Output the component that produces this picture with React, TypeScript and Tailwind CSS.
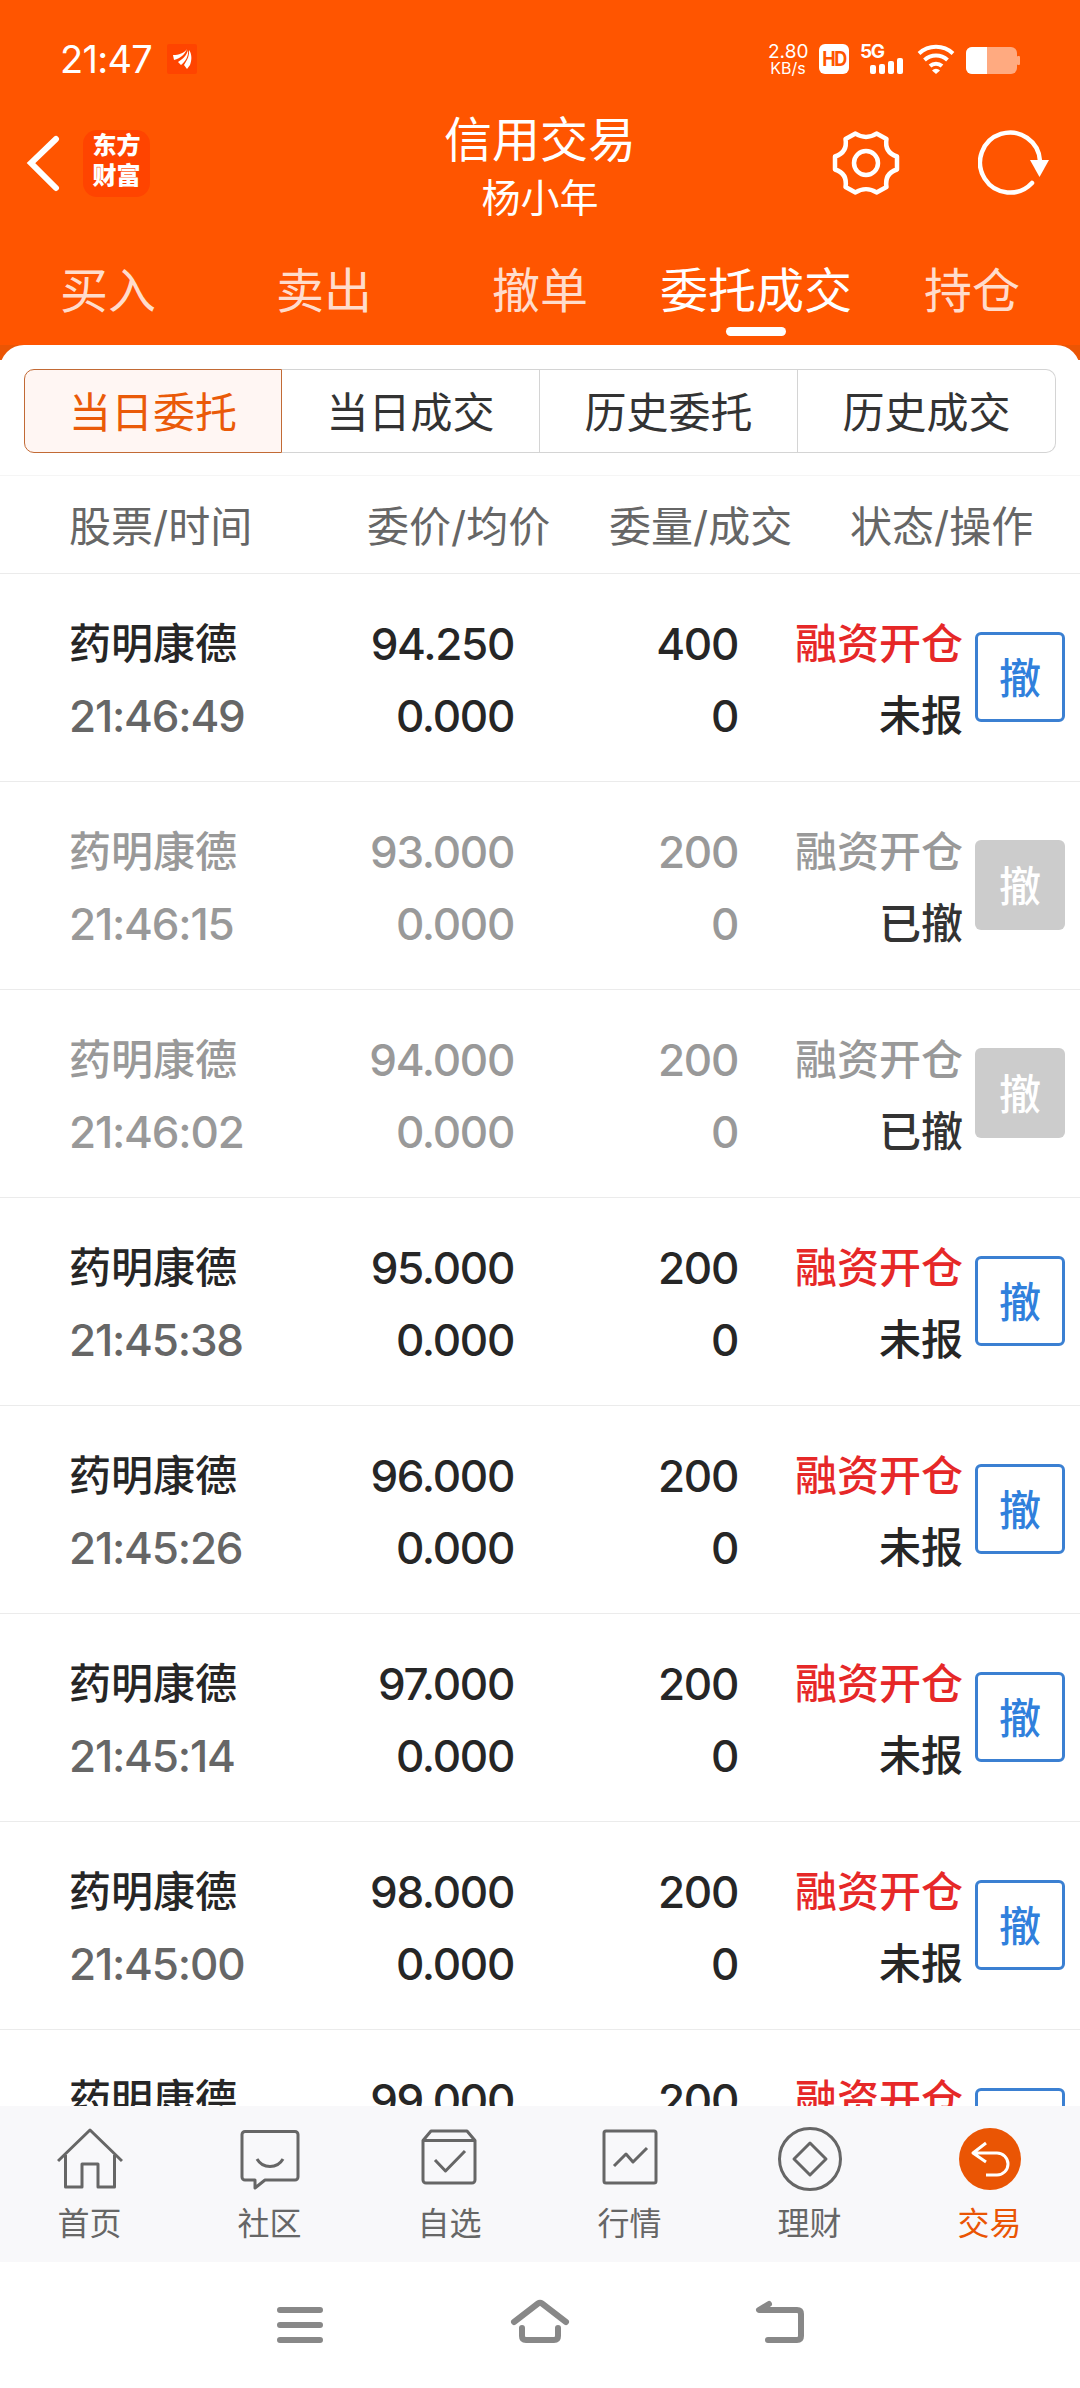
import React from 'react';

type Order = {
  time: string;
  price: string;
  amount: string;
  cancelled?: boolean;
};

const orders: Order[] = [
  { time: '21:46:49', price: '94.250', amount: '400' },
  { time: '21:46:15', price: '93.000', amount: '200', cancelled: true },
  { time: '21:46:02', price: '94.000', amount: '200', cancelled: true },
  { time: '21:45:38', price: '95.000', amount: '200' },
  { time: '21:45:26', price: '96.000', amount: '200' },
  { time: '21:45:14', price: '97.000', amount: '200' },
  { time: '21:45:00', price: '98.000', amount: '200' },
  { time: '', price: '99.000', amount: '200' },
];

const tabs = ['买入', '卖出', '撤单', '委托成交', '持仓'];
const segments = ['当日委托', '当日成交', '历史委托', '历史成交'];

const StatusBar: React.FC = () => (
  <div className="flex h-[88px] items-start pl-[60px] pr-[60px] pt-[44px] text-white">
    <span className="w-[107px] text-[38px] leading-[30px] tracking-[-0.7px]">21:47</span>
    <svg className="h-[30px] w-[30px]" viewBox="0 0 30 30">
      <rect width="30" height="30" rx="2" fill="#ff4400" />
      <g fill="#fff">
        <path d="M6 11C12 11 17 9 20 5C18 10 14 14 7 16z" />
        <path d="M11 18C16 15 20 11 21 6C22 12 18 18 14 21z" />
        <path d="M17 21C21 15 22.500 11 22 6C25 10 25 16 23 21L20 25z" />
      </g>
    </svg>
    <div className="ml-auto flex items-start">
      <div className="w-[40px] whitespace-nowrap text-center">
        <div className="text-[19px] leading-[16px]">2.80</div>
        <div className="text-[16px] leading-[16px]">KB/s</div>
      </div>
      <div className="ml-[11px] flex h-[30px] w-[30px] items-center justify-center rounded-[6px] bg-white text-[18px] font-bold leading-none tracking-[-1.5px] text-[#ff5500]">
        <span className="scale-y-110">HD</span>
      </div>
      <div className="ml-[11px] h-[30px] w-[46px]">
        <div className="h-[14px] text-[19px] font-bold leading-[16px] tracking-[-1.5px]">5G</div>
        <div className="flex h-[16px] items-end gap-[3px] pl-[10px]">
          <span className="h-[9px] w-[6px] rounded-[2px] bg-white" />
          <span className="h-[10px] w-[6px] rounded-[2px] bg-white" />
          <span className="h-[13px] w-[6px] rounded-[2px] bg-white" />
          <span className="h-[16px] w-[6px] rounded-[2px] bg-white" />
        </div>
      </div>
      <svg className="ml-[11px] h-[30px] w-[38px]" viewBox="0 0 38 30" fill="none" stroke="#fff" strokeWidth="4">
        <path d="M2 9.500a25 25 0 0 1 34 0" />
        <path d="M7.500 16a17 17 0 0 1 23 0" />
        <path d="M13 22a9 9 0 0 1 12 0" />
        <path d="M15 26.500a5.500 5.500 0 0 1 8 0L19 30z" fill="#fff" stroke="none" />
      </svg>
      <svg className="ml-[11px] mt-[3px] h-[27px] w-[54px]" viewBox="0 0 54 27">
        <rect width="51" height="27" rx="6" fill="#ffaa80" />
        <rect x="51" y="9" width="3" height="9" rx="1" fill="#ffaa80" />
        <path d="M6 0H21V27H6a6 6 0 0 1-6-6V6a6 6 0 0 1 6-6z" fill="#fff" />
      </svg>
    </div>
  </div>
);

const TitleBar: React.FC = () => (
  <div className="grid h-[150px] grid-cols-3">
    <div className="flex items-start pl-[26px] pt-[42px]">
      <svg className="mt-[4px] h-[58px] w-[34px]" viewBox="0 0 34 58" fill="none" stroke="#fff" strokeWidth="6" strokeLinecap="round">
        <path d="M30 5L5 29l25 25" />
      </svg>
      <div className="ml-[23px] flex h-[67px] w-[67px] flex-col items-center rounded-[14px] bg-[#ff4400] pt-[1px] text-[24px] font-black leading-[30px] text-white">
        <span>东方</span>
        <span>财富</span>
      </div>
    </div>
    <div className="flex flex-col items-center pt-[23px] text-white">
      <div className="text-[48px] leading-[58px]">信用交易</div>
      <div className="mt-[5px] text-[39px] leading-[48px]">杨小年</div>
    </div>
    <div className="flex items-start justify-end pr-[30px] pt-[42px]">
      <svg className="h-[66px] w-[68px]" viewBox="0 0 68 66" fill="none" stroke="#fff" strokeWidth="4.500" strokeLinejoin="round">
        <path d="M23.500 3.500C30 8 38 8 44.500 3.500L54.500 9C53 18 57 24 65 26.500V39.500C57 42 53 48 54.500 57L44.500 62.500C38 58 30 58 23.500 62.500L13.500 57C15 48 11 42 3 39.500V26.500C11 24 15 18 13.500 9Z" />
        <circle cx="34" cy="33" r="12" />
      </svg>
      <svg className="ml-[78px] h-[66px] w-[72px]" viewBox="0 0 72 66">
        <path d="M62 31A30 30 0 1 0 54 53" fill="none" stroke="#fff" strokeWidth="4.500" strokeLinecap="round" />
        <path d="M52 30H71L61.500 47z" fill="#fff" />
      </svg>
    </div>
  </div>
);

const OrderRow: React.FC<{ order: Order }> = ({ order }) => {
  const main = order.cancelled ? 'text-[#999]' : 'text-[#262626]';
  return (
    <div className="flex h-[208px] shrink-0 border-b border-[#ebebeb] pl-[69px] pt-[34px] text-[42px] font-medium leading-[72px]">
      <div className="w-[221px]">
        <div className={main}>药明康德</div>
        <div className={order.cancelled ? 'text-[44px] tracking-[-1.2px] text-[#999]' : 'text-[44px] tracking-[-1.2px] text-[#666]'}>
          {order.time}
        </div>
      </div>
      <div className={`w-[224px] text-right text-[44px] tracking-[-1.3px] ${main}`}>
        <div>{order.price}</div>
        <div>0.000</div>
      </div>
      <div className={`w-[224px] text-right text-[44px] tracking-[-1.3px] ${main}`}>
        <div>{order.amount}</div>
        <div>0</div>
      </div>
      <div className="w-[225px] text-right">
        <div className={order.cancelled ? 'text-[#999]' : 'text-[#e62828]'}>融资开仓</div>
        <div className={order.cancelled ? 'text-[#333]' : 'text-[#262626]'}>{order.cancelled ? '已撤' : '未报'}</div>
      </div>
      <button
        className={
          order.cancelled
            ? 'ml-[12px] mt-[24px] flex h-[90px] w-[90px] items-center justify-center rounded-[6px] bg-[#ccc] pt-[3px] leading-none text-white'
            : 'ml-[12px] mt-[24px] flex h-[90px] w-[90px] items-center justify-center rounded-[6px] border-3 border-[#3b80d2] pt-[3px] leading-none text-[#3080dc]'
        }
      >
        撤
      </button>
    </div>
  );
};

const navItems = [
  {
    label: '首页',
    icon: (
      <>
        <path d="M1 35L33 4l32 31" />
        <path d="M8.500 29V61H25V38H41V61H57.500V29" />
      </>
    ),
  },
  {
    label: '社区',
    icon: (
      <>
        <path d="M8 5.500H58a3 3 0 0 1 3 3V51a3 3 0 0 1-3 3H28l-10 8V54H8a3 3 0 0 1-3-3V8.500a3 3 0 0 1 3-3z" />
        <path d="M20 33a15 15 0 0 0 26 0" />
      </>
    ),
  },
  {
    label: '自选',
    icon: (
      <>
        <path d="M6 14.500L14 5H50l8 9.500V54a3 3 0 0 1-3 3H9a3 3 0 0 1-3-3z" />
        <path d="M6 14.500H58M18 34l10.500 11L48 25" />
      </>
    ),
  },
  {
    label: '行情',
    icon: (
      <>
        <rect x="7" y="5" width="52" height="52" rx="2" />
        <path d="M17 40l12-12 7 8 14-14" />
      </>
    ),
  },
  {
    label: '理财',
    icon: (
      <>
        <circle cx="33" cy="33" r="30.500" />
        <path d="M33 17L49 33 33 49 17 33z" />
      </>
    ),
  },
  {
    label: '交易',
    icon: (
      <>
        <circle cx="33" cy="33" r="31" fill="#ea5504" stroke="none" />
        <path d="M29 17L16 27l13 9M16 27H40a11 11 0 0 1 0 22H29" stroke="#fff" />
      </>
    ),
  },
];

const BottomNav: React.FC = () => (
  <div className="grid h-[156px] shrink-0 grid-cols-6 bg-[#f8f8fa]">
    {navItems.map((item, i) => (
      <div key={item.label} className={`flex flex-col items-center pr-[1px] pt-[20px] ${i === 5 ? 'text-[#ea5504]' : 'text-[#666]'}`}>
        <svg className="h-[66px] w-[66px]" viewBox="0 0 66 66" fill="none" stroke="currentColor" strokeWidth="3" strokeLinejoin="round">
          {item.icon}
        </svg>
        <span className="mt-[12px] text-[32px] leading-[40px]">{item.label}</span>
      </div>
    ))}
  </div>
);

const SystemNav: React.FC = () => (
  <div className="flex h-[126px] shrink-0 items-start justify-center gap-[180px] bg-white pt-[33px] text-[#888]">
    <svg className="h-[54px] w-[60px]" viewBox="0 0 60 54" fill="none" stroke="currentColor" strokeWidth="6" strokeLinecap="round">
      <path d="M10 15H50M10 30H50M10 45H50" />
    </svg>
    <svg className="h-[54px] w-[60px]" viewBox="0 0 60 54" fill="none" stroke="currentColor" strokeWidth="6" strokeLinecap="round">
      <path d="M4 27L28 8.500q2-1.500 4 0L56 27M12 33v8q0 4 4 4H44q4 0 4-4V33" />
    </svg>
    <svg className="h-[54px] w-[60px]" viewBox="0 0 60 54" fill="none" stroke="currentColor" strokeWidth="6" strokeLinecap="round" strokeLinejoin="round">
      <path d="M19 9L9 15H47q4 0 4 4V41q0 4-4 4H18" />
    </svg>
  </div>
);

const App: React.FC = () => {
  return (
    <div className="flex h-[2388px] w-[1080px] flex-col overflow-hidden bg-white font-['Inter','Noto_Sans_CJK_SC',sans-serif]">
      <header className="h-[345px] shrink-0 bg-[#ff5500]">
        <StatusBar />
        <TitleBar />
        <div className="grid grid-cols-5 text-[48px] leading-[60px]">
          {tabs.map((tab) => (
            <div key={tab} className="flex flex-col items-center whitespace-nowrap pt-[23px]">
              <span className={tab === '委托成交' ? 'text-white' : 'text-[#ffdccc]'}>{tab}</span>
              {tab === '委托成交' && <div className="mt-[6px] h-[9px] w-[60px] rounded-full bg-white" />}
            </div>
          ))}
        </div>
      </header>

      <div className="h-[131px] shrink-0 bg-linear-to-b from-[#eb5504] from-[15px] to-white to-[15px]">
        <div className="h-full rounded-t-[24px] border-b border-[#f5f5f5] bg-white px-[24px] pt-[24px]">
          <div className="grid h-[84px] grid-cols-4 text-[42px]">
            {segments.map((name, i) => (
              <div
                key={name}
                className={
                  i === 0
                    ? 'flex items-center justify-center rounded-l-[10px] border border-[#c26a35] bg-[#fff6f3] pt-[3px] text-[#ea5a08]'
                    : 'flex items-center justify-center border-y border-r border-[#d4d4d4] pt-[3px] text-[#333] last:rounded-r-[10px]'
                }
              >
                {name}
              </div>
            ))}
          </div>
        </div>
      </div>

      <div className="flex h-[98px] shrink-0 items-center border-b border-[#ebebeb] pl-[69px] pt-[4px] text-[42px] text-[#666]">
        <span className="w-[298px]">股票/时间</span>
        <span className="w-[242px]">委价/均价</span>
        <span className="w-[241px]">委量/成交</span>
        <span>状态/操作</span>
      </div>

      <main className="flex min-h-0 flex-1 flex-col overflow-hidden">
        {orders.map((order) => (
          <OrderRow key={order.price} order={order} />
        ))}
      </main>

      <BottomNav />
      <SystemNav />
    </div>
  );
};

export default App;
